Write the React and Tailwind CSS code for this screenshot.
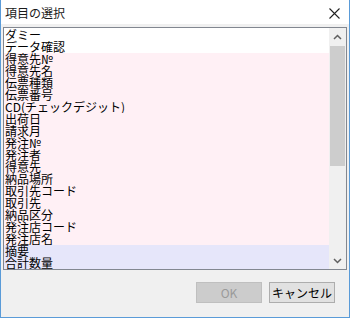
import React from "react";

const P = "bg-[#fff0f5]";
const L = "bg-[#e6e6fa]";
const items = [
  { t: "ダミー", c: "bg-white" },
  { t: "データ確認", c: "bg-white" },
  { t: "得意先№", c: P },
  { t: "得意先名", c: P },
  { t: "伝票種類", c: P },
  { t: "伝票番号", c: P },
  { t: "CD(チェックデジット)", c: P },
  { t: "出荷日", c: P },
  { t: "請求月", c: P },
  { t: "発注№", c: P },
  { t: "発注者", c: P },
  { t: "得意先", c: P },
  { t: "納品場所", c: P },
  { t: "取引先コード", c: P },
  { t: "取引先", c: P },
  { t: "納品区分", c: P },
  { t: "発注店コード", c: P },
  { t: "発注店名", c: P },
  { t: "摘要", c: L },
  { t: "合計数量", c: L },
];

export default function App() {
  return (
    <div
      className="w-[350px] h-[318px] bg-[#f0f0f0] border-x border-b border-[#5a9bd8] flex flex-col overflow-hidden"
      style={{ fontFamily: '"Noto Sans CJK JP", "Noto Sans", sans-serif' }}
    >
      <div className="h-[24px] bg-white flex items-center justify-between pl-[4px] pr-[9px]">
        <span className="text-[12px] leading-[12px] text-[#1a1a1a] pt-[1px]">項目の選択</span>
        <svg width="11" height="11" viewBox="0 0 11 11" className="mt-[2px]">
          <path d="M0.5 0.5 L10.5 10.5 M10.5 0.5 L0.5 10.5" stroke="#222" strokeWidth="1.1" fill="none" />
        </svg>
      </div>
      <div className="mt-[3px] mx-[2px] h-[243px] border border-[#828790] bg-white flex">
        <div className="flex-1 pt-[1px] flex flex-col">
          {items.map((it, i) => (
            <div
              key={i}
              className={`${it.c} h-[12px] text-[12px] leading-[12px] text-black pl-[1px] whitespace-nowrap`}
            >
              {it.t}
            </div>
          ))}
        </div>
        <div className="w-[17px] bg-[#f0f0f0] flex flex-col">
          <div className="h-[17px] flex items-center justify-center">
            <svg width="9" height="6" viewBox="0 0 9 6">
              <path d="M1 5 L4.5 1.5 L8 5" stroke="#606060" strokeWidth="1.5" fill="none" />
            </svg>
          </div>
          <div className="mt-[1px] mx-[1px] h-[120px] bg-[#cdcdcd]" />
          <div className="flex-1" />
          <div className="h-[17px] flex items-center justify-center">
            <svg width="9" height="6" viewBox="0 0 9 6">
              <path d="M1 1 L4.5 4.5 L8 1" stroke="#606060" strokeWidth="1.5" fill="none" />
            </svg>
          </div>
        </div>
      </div>
      <div className="mt-[12px] flex justify-end gap-[7px] pr-[14px]">
        <div className="w-[66px] h-[21px] bg-[#cccccc] border border-[#bfbfbf] flex items-center justify-center text-[12px] text-[#9a9a9a]">
          OK
        </div>
        <div className="w-[66px] h-[21px] bg-[#e1e1e1] border border-[#adadad] flex items-center justify-center text-[12px] text-black">
          キャンセル
        </div>
      </div>
    </div>
  );
}
